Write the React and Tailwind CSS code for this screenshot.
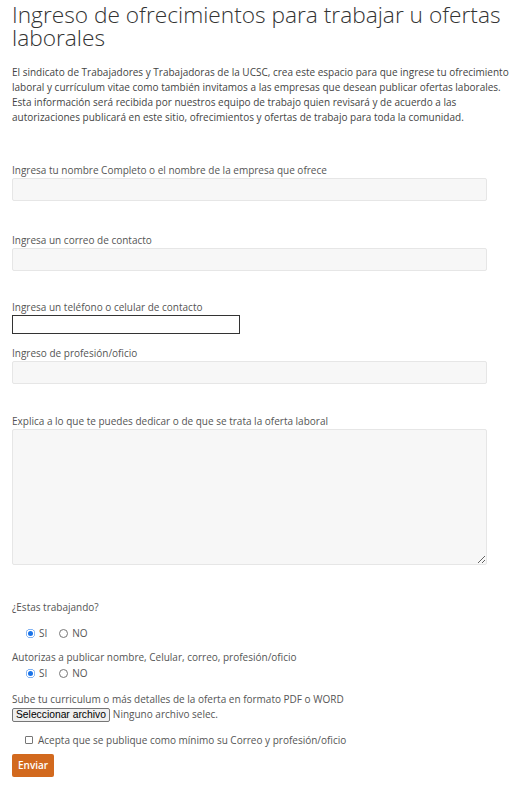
import React from 'react';

const font = { fontFamily: '"Open Sans", sans-serif' };

const Radio = ({ checked, label }) => (
  <span className="flex items-center gap-[4px]">
    {checked ? (
      <span className="w-[9px] h-[9px] rounded-full bg-[#1a73e8] flex items-center justify-center">
        <span className="w-[5px] h-[5px] rounded-full bg-[#1a73e8] ring-[1.5px] ring-white" />
      </span>
    ) : (
      <span className="w-[9px] h-[9px] rounded-full border border-[#767676] bg-white" />
    )}
    <span>{label}</span>
  </span>
);

const Field = ({ label, className = '', children }) => (
  <div className={className}>
    <label className="block text-[10px] leading-4 text-[#555]">{label}</label>
    {children}
  </div>
);

export default function App() {
  return (
    <div className="bg-white min-h-screen pl-3 pr-[6px] text-[#555]" style={font}>
      <h1 className="text-[22.7px] leading-[23px] font-light text-[#333] pt-[3px] pr-[6px]">
        Ingreso de ofrecimientos para trabajar u ofertas laborales
      </h1>

      <p className="mt-[16px] text-[10px] leading-[15px] text-[#444]">
        El sindicato de Trabajadores y Trabajadoras de la UCSC, crea este espacio para que ingrese tu ofrecimiento
        laboral y currículum vitae como también invitamos a las empresas que desean publicar ofertas laborales.
        Esta información será recibida por nuestros equipo de trabajo quien revisará y de acuerdo a las
        autorizaciones publicará en este sitio, ofrecimientos y ofertas de trabajo para toda la comunidad.
      </p>

      <form>
        <Field label="Ingresa tu nombre Completo o el nombre de la empresa que ofrece" className="mt-[37px]">
          <input type="text" className="block w-[475px] h-[23px] bg-[#f7f7f7] border border-[#e6e6e6] rounded-[2px] outline-none" />
        </Field>

        <Field label="Ingresa un correo de contacto" className="mt-[31px]">
          <input type="text" className="block w-[475px] h-[23px] bg-[#f7f7f7] border border-[#e6e6e6] rounded-[2px] outline-none" />
        </Field>

        <Field label="Ingresa un teléfono o celular de contacto" className="mt-[28px]">
          <input type="tel" className="block w-[228px] h-[19px] bg-white border border-[#333] outline-none" />
        </Field>

        <Field label="Ingreso de profesión/oficio" className="mt-[11px]">
          <input type="text" className="block w-[475px] h-[23px] bg-[#f7f7f7] border border-[#e6e6e6] rounded-[2px] outline-none" />
        </Field>

        <Field label="Explica a lo que te puedes dedicar o de que se trata la oferta laboral" className="mt-[29px]">
          <textarea className="block w-[475px] h-[136px] bg-[#f7f7f7] border border-[#e6e6e6] rounded-[2px] outline-none" />
        </Field>

        <div className="mt-[34px] text-[10px] leading-4">¿Estas trabajando?</div>
        <div className="mt-[10px] flex gap-[12px] pl-[14px] text-[10px] leading-4">
          <Radio checked label="SI" />
          <Radio label="NO" />
        </div>

        <div className="mt-[8px] text-[10px] leading-4">Autorizas a publicar nombre, Celular, correo, profesión/oficio</div>
        <div className="flex gap-[12px] pl-[14px] text-[10px] leading-4">
          <Radio checked label="SI" />
          <Radio label="NO" />
        </div>

        <div className="mt-[10px] text-[10px] leading-4">
          Sube tu curriculum o más detalles de la oferta en formato PDF o WORD
        </div>
        <div className="flex items-center gap-[3px] text-[10px]">
          <span
            className="h-[14px] px-[3px] flex items-center border border-[#767676] bg-[#efefef] rounded-[2px] text-[10.3px] text-black"
            style={{ fontFamily: '"Liberation Sans", Arial, sans-serif' }}
          >
            Seleccionar archivo
          </span>
          <span>Ninguno archivo selec.</span>
        </div>

        <label className="mt-[10px] flex items-center gap-[5px] pl-[13px] text-[10px] leading-4">
          <span className="w-[8px] h-[8px] border border-[#767676] rounded-[1px] bg-white" />
          <span>Acepta que se publique como mínimo su Correo y profesión/oficio</span>
        </label>

        <button
          type="button"
          className="mt-[6px] h-[23px] px-[6px] bg-[#d2691e] text-white text-[10px] font-semibold rounded-[2px]"
        >
          Enviar
        </button>
      </form>
    </div>
  );
}
